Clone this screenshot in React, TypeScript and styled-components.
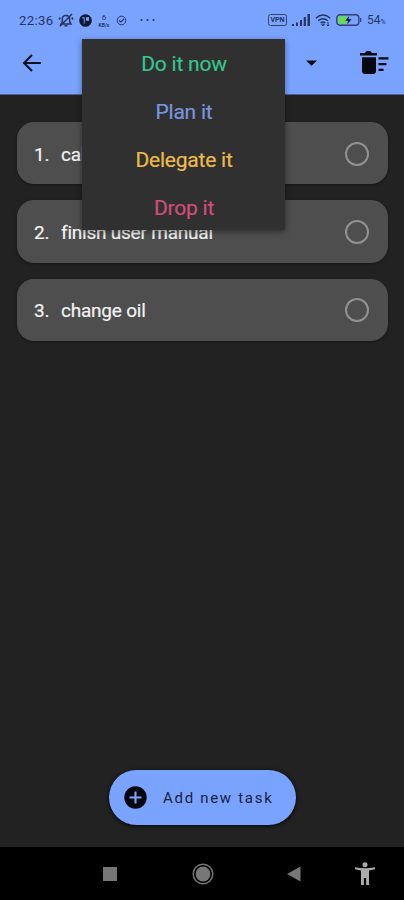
import React from "react";
import styled, { createGlobalStyle } from "styled-components";

const GlobalStyle = createGlobalStyle`
  * { box-sizing: border-box; }
  body { margin: 0; background: #222; font-family: Roboto, "Liberation Sans", sans-serif; }
  button { font-family: inherit; border: 0; padding: 0; background: none; }
  svg { display: block; }
`;

const Screen = styled.main`
  position: relative;
  width: 404px;
  height: 900px;
  display: flex;
  flex-direction: column;
  background: #222;
  overflow: hidden;
`;

const Header = styled.header`
  height: 95px;
  background: #7aa3ff;
  border-bottom: 1px solid #4e5f8b;
`;

const StatusBar = styled.div`
  height: 39px;
  padding: 1px 17px 0 19px;
  display: flex;
  align-items: center;
  justify-content: space-between;
  color: #26365e;
`;

const StatusGroup = styled.div<{ $gap: number }>`
  display: flex;
  align-items: center;
  gap: ${(p) => p.$gap}px;
`;

const Clock = styled.span`
  width: 35px;
  font-size: 13.2px;
  letter-spacing: 0.3px;
  white-space: nowrap;
`;

const Speed = styled.span`
  width: 13px;
  display: flex;
  flex-direction: column;
  align-items: center;
  font-size: 8px;
  line-height: 9px;
`;

const SpeedUnit = styled.span`
  font-size: 5px;
  line-height: 6px;
  font-weight: 700;
`;

const VpnBadge = styled.span`
  width: 19px;
  height: 12px;
  display: flex;
  align-items: center;
  justify-content: center;
  border: 1px solid #33436f;
  border-radius: 2.5px;
  font-size: 7px;
  font-weight: 700;
`;

const BatteryLevel = styled.span`
  width: 20px;
  font-size: 12px;
  display: flex;
  align-items: baseline;
`;

const Percent = styled.span`
  font-size: 7px;
`;

const Toolbar = styled.div`
  height: 48px;
  padding: 0 15px 0 22px;
  display: flex;
  align-items: center;
`;

const BackButton = styled.button`
  margin-right: auto;
`;

const SpinnerArrow = styled.button`
  margin-right: 43px;
`;

const TaskList = styled.ol`
  flex: 1;
  margin: 0;
  padding: 27px 16px 0 17px;
  display: flex;
  flex-direction: column;
  gap: 16px;
  list-style: none;
`;

const TaskCard = styled.li`
  height: 62.3px;
  padding: 1px 19px 0 17px;
  display: flex;
  align-items: center;
  border-radius: 17px;
  background: #4e4e4e;
  box-shadow: 0 1px 3px rgba(0, 0, 0, 0.35);
  color: #f2f2f2;
  font-size: 19px;
  letter-spacing: -0.22px;
  -webkit-text-stroke: 0.2px currentColor;
`;

const TaskNumber = styled.span`
  width: 27px;
  padding-top: 1px;
`;

const TaskTitle = styled.span`
  flex: 1;
  padding-top: 1px;
`;

const TaskRadio = styled.span`
  width: 24px;
  height: 24px;
  border: 2px solid #929292;
  border-radius: 50%;
`;

const Menu = styled.div`
  position: absolute;
  left: 81.5px;
  top: 39px;
  width: 203px;
  height: 191px;
  display: flex;
  flex-direction: column;
  background: #303030;
  box-shadow: 0 2px 6px rgba(0, 0, 0, 0.4);
  overflow: hidden;
`;

const MenuItem = styled.button<{ $color: string }>`
  flex: 0 0 48px;
  padding-top: 1px;
  padding-left: 2px;
  color: ${(p) => p.$color};
  font-size: 21px;
  letter-spacing: -0.22px;
  -webkit-text-stroke: 0.2px currentColor;
  text-align: center;
`;

const AddButton = styled.button`
  width: 187px;
  height: 55px;
  margin: 0 auto 22px 109px;
  padding: 0 0 0 14px;
  display: flex;
  align-items: center;
  gap: 16px;
  border-radius: 28px;
  background: #7aa3ff;
  box-shadow: 0 1px 4px rgba(0, 0, 0, 0.9);
  color: #17223d;
  font-size: 15px;
  letter-spacing: 1.7px;
  white-space: nowrap;
`;

const NavBar = styled.nav`
  height: 53px;
  padding: 0 29px 0 103px;
  display: grid;
  grid-template-columns: 89px 95px 68px 20px;
  align-items: center;
  background: #000;
`;

const tasks = ["call Adam", "finish user manual", "change oil"];

const actions = [
  { label: "Do it now", color: "#36c58e" },
  { label: "Plan it", color: "#7896df" },
  { label: "Delegate it", color: "#edbb4d" },
  { label: "Drop it", color: "#d24d79" },
];

const BellOffIcon = () => (
  <svg width="16" height="15" viewBox="0 0 16 15" fill="none" stroke="currentColor" strokeWidth="1.5">
    <path d="M3 11h10L11.7 9V6.3C11.7 4 10.3 2.5 8 2.5S4.3 4 4.3 6.3V9zM6.5 12.7h3M2 13.2 14 1M1 6.5l1.2-2M15 6.5l-1.2-2" />
  </svg>
);

const AppBadgeIcon = () => (
  <svg width="13" height="13" viewBox="0 0 13 13">
    <circle cx="6.5" cy="6.5" r="6.3" fill="#101a35" />
    <path d="M3.3 3.2h2.4v6.2H4.8V4.5H3.3zM7 3.2h3v3.6H7z" fill="#7aa3ff" />
  </svg>
);

const CheckBadgeIcon = () => (
  <svg width="11" height="11" viewBox="0 0 11 11" fill="none" stroke="currentColor">
    <circle cx="5.5" cy="5.5" r="4.3" />
    <path d="m3.1 5.5 1.8 1.5L8 3.8" strokeWidth="1.2" />
  </svg>
);

const DotsIcon = () => (
  <svg width="15" height="4" viewBox="0 0 15 4" fill="currentColor">
    <circle cx="1.5" cy="2" r="1.1" />
    <circle cx="7.5" cy="2" r="1.1" />
    <circle cx="13.5" cy="2" r="1.1" />
  </svg>
);

const SignalIcon = () => (
  <svg width="18" height="12" viewBox="0 0 18 12" fill="currentColor">
    <path d="M0 10h2v2H0zM4 8.5h2V12H4zM8 6h2v6H8zM11.7 3h2.2v9h-2.2zM15.5 0H18v12h-2.5z" />
  </svg>
);

const WifiIcon = () => (
  <svg width="16" height="13" viewBox="0 0 16 13" fill="none" stroke="currentColor" strokeWidth="1.4">
    <path d="M.8 4.2Q8-2 15.2 4.2M3.2 6.7Q8 2.6 12.8 6.7M5.6 9Q8 7 10.4 9" />
    <path d="M6.7 10.2 8 12l1.3-1.8zM13 8v4M11.8 10.7 13 12l1.3-1.3" strokeWidth="1" />
  </svg>
);

const BatteryIcon = () => (
  <svg width="26" height="12" viewBox="0 0 26 12">
    <rect x=".8" y=".8" width="22" height="10.4" rx="3" fill="none" stroke="#33436f" strokeWidth="1.4" />
    <path d="M24 4h1.3v4H24z" fill="#33436f" />
    <rect x="2.5" y="2.3" width="8.5" height="7.4" rx="1" fill="#65dc56" />
    <path d="m13.3 1.8-4 5h2.8l-1 3.8 4.4-5.3h-3z" fill="#101a35" />
  </svg>
);

const BackIcon = () => (
  <svg width="20" height="18" viewBox="0 0 20 18" fill="none" stroke="#08101f" strokeWidth="2">
    <path d="M18.8 9H2M10 1 2 9l8 8" />
  </svg>
);

const CaretIcon = () => (
  <svg width="11" height="6" viewBox="0 0 11 6">
    <path d="M0 .4h11L5.5 5.8z" fill="#05080f" />
  </svg>
);

const ClearTasksIcon = () => (
  <svg width="29" height="24" viewBox="0 0 29 24">
    <path d="M0 2h5l1.5-2h4L12 2h5v2.5H0zM2 6.2h14V20q0 3-3 3H5q-3 0-3-3zM18.5 6.3h10v2.2h-10zM18.5 12h8v2.2h-8zM18.5 17.8h5V20h-5z" fill="#05080f" />
  </svg>
);

const PlusIcon = () => (
  <svg width="24" height="24" viewBox="0 0 24 24">
    <circle cx="12.5" cy="11.5" r="11.2" fill="#03060d" />
    <path d="M12.5 5.5v12M6.5 11.5h12" stroke="#7aa3ff" strokeWidth="2.1" />
  </svg>
);

const RecentsIcon = () => (
  <svg width="14" height="14" viewBox="0 0 14 14">
    <rect width="14" height="14" fill="#767676" />
  </svg>
);

const HomeIcon = () => (
  <svg width="22" height="22" viewBox="0 0 22 22">
    <circle cx="11" cy="11" r="9.8" fill="none" stroke="#757575" strokeWidth="1.5" />
    <circle cx="11" cy="11" r="7.4" fill="#777" />
  </svg>
);

const NavBackIcon = () => (
  <svg width="14" height="16" viewBox="0 0 14 16">
    <path d="M0 8 13.5.5v15z" fill="#777" />
  </svg>
);

const PersonIcon = () => (
  <svg width="20" height="24" viewBox="0 0 20 24" fill="#aaa">
    <circle cx="10" cy="2.8" r="2.5" />
    <path d="M0 5.2q10 2.2 20 0v2.1l-6 1.2V23h-2.9v-7H8.9v7H6V8.5L0 7.3z" />
  </svg>
);

export default function App() {
  return (
    <>
      <GlobalStyle />
      <Screen>
        <Header>
          <StatusBar>
            <StatusGroup $gap={5.5}>
              <StatusGroup $gap={3.5}>
                <Clock>22:36</Clock>
                <BellOffIcon />
              </StatusGroup>
              <AppBadgeIcon />
              <Speed>
                <span>6</span>
                <SpeedUnit>KB/s</SpeedUnit>
              </Speed>
              <StatusGroup $gap={13}>
                <CheckBadgeIcon />
                <DotsIcon />
              </StatusGroup>
            </StatusGroup>
            <StatusGroup $gap={5}>
              <VpnBadge>VPN</VpnBadge>
              <SignalIcon />
              <WifiIcon />
              <BatteryIcon />
              <BatteryLevel>
                54<Percent>%</Percent>
              </BatteryLevel>
            </StatusGroup>
          </StatusBar>
          <Toolbar>
            <BackButton aria-label="Back">
              <BackIcon />
            </BackButton>
            <SpinnerArrow aria-label="Choose category">
              <CaretIcon />
            </SpinnerArrow>
            <button aria-label="Clear tasks">
              <ClearTasksIcon />
            </button>
          </Toolbar>
        </Header>
        <TaskList>
          {tasks.map((title, i) => (
            <TaskCard key={title}>
              <TaskNumber>{i + 1}.</TaskNumber>
              <TaskTitle>{title}</TaskTitle>
              <TaskRadio />
            </TaskCard>
          ))}
        </TaskList>
        <AddButton>
          <PlusIcon />
          Add new task
        </AddButton>
        <NavBar>
          <RecentsIcon />
          <HomeIcon />
          <NavBackIcon />
          <PersonIcon />
        </NavBar>
        <Menu>
          {actions.map((a) => (
            <MenuItem key={a.label} $color={a.color}>
              {a.label}
            </MenuItem>
          ))}
        </Menu>
      </Screen>
    </>
  );
}
